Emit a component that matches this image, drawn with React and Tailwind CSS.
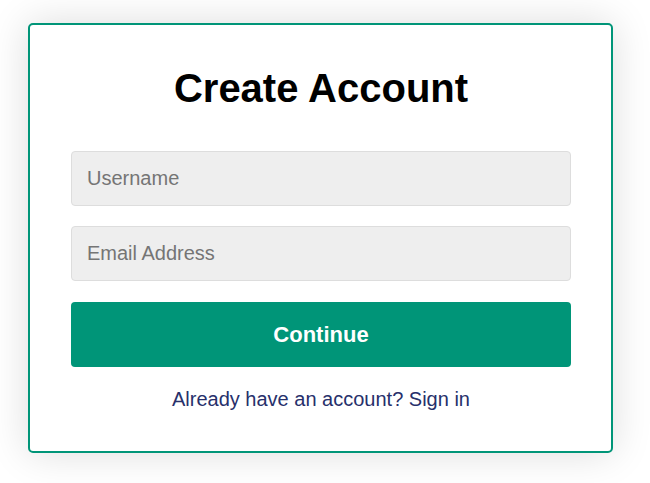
import { useState } from 'react';

export default function App() {
    const [username, setUsername] = useState('');
    const [email, setEmail] = useState('');

    return (
        <div className="min-h-[483px] w-[650px] bg-white pt-[23px] pl-[28px] font-['Liberation_Sans',Arial,sans-serif]">
            {/* Card */}
            <div className="w-[585px] rounded-[5px] border-2 border-[#009578] bg-white pl-[41px] pr-[40px] pt-[40px] pb-[40px] shadow-[0_0_40px_rgba(0,0,0,0.14)]">
                <h1 className="mb-[40px] text-center text-[40px] leading-[46px] font-bold text-black">Create Account</h1>

                <div className="flex flex-col gap-[20px]">
                    <input
                        type="text"
                        value={username}
                        onChange={e => setUsername(e.target.value)}
                        placeholder="Username"
                        className="h-[55px] w-full rounded-[4px] border border-[#dddddd] bg-[#eeeeee] px-[15px] text-[20px] text-[#333] outline-none placeholder:text-[#757575]"
                    />
                    <input
                        type="email"
                        value={email}
                        onChange={e => setEmail(e.target.value)}
                        placeholder="Email Address"
                        className="h-[55px] w-full rounded-[4px] border border-[#dddddd] bg-[#eeeeee] px-[15px] text-[20px] text-[#333] outline-none placeholder:text-[#757575]"
                    />
                </div>

                <button className="mt-[21px] h-[65px] w-full rounded-[4px] bg-[#009578] text-[22px] font-bold text-white">
                    Continue
                </button>

                <p className="mt-[21px] text-center text-[20px] leading-[23px] text-[#27306b]">
                    Already have an account? Sign in
                </p>
            </div>
        </div>
    );
}
